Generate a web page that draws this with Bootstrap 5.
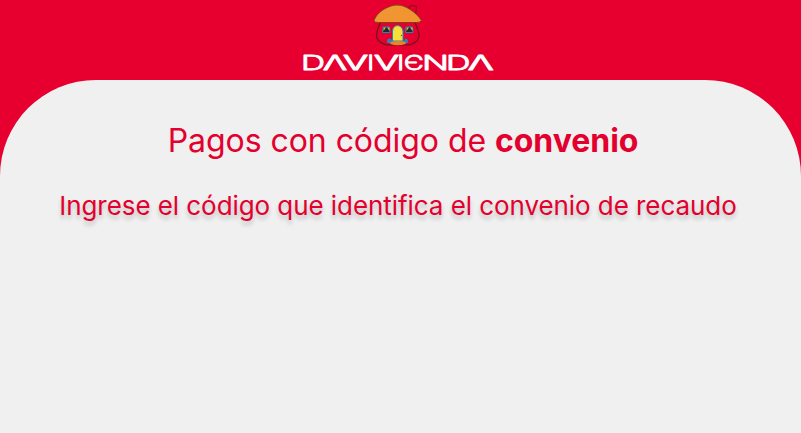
<!DOCTYPE html>
<html lang="es">
<head>
<meta charset="utf-8">
<meta name="viewport" content="width=device-width, initial-scale=1">
<title>Davivienda</title>
<link href="https://cdn.jsdelivr.net/npm/bootstrap@5.3.0/dist/css/bootstrap.min.css" rel="stylesheet">
<style>
body{background:#e7002f;font-family:Inter,"Liberation Sans",sans-serif;color:#e4002e}
.brand-bar{height:80px;padding-right:5px}
.sheet{background:#f0f0f0;border-radius:96px 96px 0 0;padding-top:41px}
.title{font-size:32px;line-height:40px;font-weight:400;padding-left:5px;letter-spacing:-.05px}
.subtitle{font-size:26px;line-height:32px;margin-top:29px;padding-right:5px;letter-spacing:-.065px;text-shadow:0 4px 4px rgba(0,0,0,.2)}
.wordmark{font-family:Inter,sans-serif;font-size:20px;font-weight:300;fill:#fff;stroke:#fff;stroke-width:.8;stroke-linejoin:round}
.wordmark .stem{stroke-width:1.6}
.wordmark .slant{stroke-width:1}
</style>
</head>
<body class="d-flex flex-column vh-100 overflow-hidden">
<header class="brand-bar d-flex justify-content-center flex-shrink-0">
<svg width="200" height="80" viewBox="298.500 0 200 80" role="img" aria-label="Davivienda">
<path d="M409 11L410 6.500Q413 4.500 417 6.500L416 15" fill="#e7002f" stroke="#8a101c" stroke-width="1.200"/>
<path d="M381 22C379 28 375.500 33 377.500 38Q379.500 43 387 44.800H410Q417 43 419 38C421 33 417 28 415.500 22Z" fill="#e7002f" stroke="#79111c" stroke-width="1.300"/>
<path d="M374.500 20.500C376 16 381 10 389 7C395 4.200 402 4.200 408 8C414 11 420 17 421.800 20.500Q421.800 22.500 417 22.500H379Q374 22.500 374.500 20.500Z" fill="#f19532" stroke="#804016" stroke-width="1"/>
<path d="M387.500 42.500Q387 38 391 38.500L393 41H404L406 38.500Q409 39 408.500 42.500L405 43.500H391Z" fill="#2387b5"/>
<path d="M393 41V31Q393.500 25.800 398 25.600Q402.500 26 403.500 31V41Z" fill="#f7df3a" stroke="#2387b5" stroke-width="1"/>
<path d="M391 42Q398 40 406 42V44Q398 46.500 391 44Z" fill="#e7842e"/>
<circle cx="402" cy="35.500" r=".7" fill="#735b1f"/>
<path d="M383.500 27H390L390.500 32.500H383Z" fill="#172c36" stroke="#2387b5" stroke-width="1"/><path d="M384 27.500H386.500L384 31ZM387.500 27.500H390V31Z" fill="#e2b831"/>
<path d="M406.500 27H413L413.500 32.500H406Z" fill="#172c36" stroke="#2387b5" stroke-width="1"/><path d="M407 27.500H409.500L407 31ZM410.500 27.500H413V31Z" fill="#e2b831"/>
<g class="wordmark">
<text x="301.500" y="69.900" textLength="24" lengthAdjust="spacingAndGlyphs">D</text>
<text class="slant" x="323.500" y="69.900" textLength="24" lengthAdjust="spacingAndGlyphs">Λ</text>
<text class="slant" x="343.500" y="69.900" textLength="25" lengthAdjust="spacingAndGlyphs">V</text>
<text class="stem" x="368.400" y="69.900">I</text>
<text class="slant" x="374.500" y="69.900" textLength="25" lengthAdjust="spacingAndGlyphs">V</text>
<text class="stem" x="398.500" y="69.900">I</text>
<text x="404.300" y="69.900" textLength="20" lengthAdjust="spacingAndGlyphs">Є</text>
<text x="422.500" y="69.900" textLength="27" lengthAdjust="spacingAndGlyphs">N</text>
<text x="446.500" y="69.900" textLength="24.500" lengthAdjust="spacingAndGlyphs">D</text>
<text class="slant" x="468.500" y="69.900" textLength="25.500" lengthAdjust="spacingAndGlyphs">Λ</text>
</g>
</svg>
</header>
<main class="sheet flex-grow-1 text-center text-nowrap">
<h1 class="title mb-0">Pagos con código de <strong>convenio</strong></h1>
<p class="subtitle mb-0">Ingrese el código que identifica el convenio de recaudo</p>
</main>
<script src="https://cdn.jsdelivr.net/npm/bootstrap@5.3.0/dist/js/bootstrap.bundle.min.js"></script>
</body>
</html>
